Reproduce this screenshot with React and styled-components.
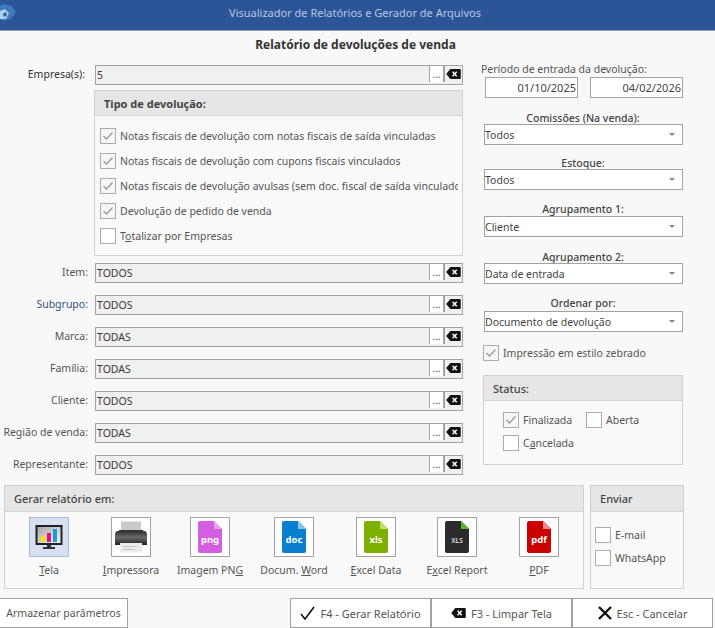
import React from 'react';
import styled, { createGlobalStyle } from 'styled-components';

const Global = createGlobalStyle`
  html, body { margin: 0; padding: 0; background: #f8f8f8; }
  body { font-family: "Noto Sans", "Open Sans", "Liberation Sans", sans-serif; font-size: 10.5px; color: #444; }
  * { box-sizing: border-box; }
`;
const Page = styled.div`width: 715px; height: 628px; overflow: hidden; display: flex; flex-direction: column; background: #f8f8f8;`;
const TitleBar = styled.header`
  height: 31px; flex: none; background: #2c5597; border-bottom: 1px solid #8f9db3; display: flex; align-items: center; justify-content: center;
  position: relative; color: #b5c6e0; font-size: 11px; padding: 0 5px 5px 0;
`;
const Logo = styled.svg`position: absolute; left: 0; top: 3px;`;
const Title = styled.h1`margin: 0; height: 34px; flex: none; display: flex; align-items: center; justify-content: center; font-size: 12px; font-weight: 700; color: #333; padding: 0 4px 8px 0;`;
const Main = styled.main`display: flex; flex: none; height: 420px; align-items: flex-start;`;
const Left = styled.section`width: 463px; flex: none; display: flex; flex-direction: column;`;
const Right = styled.section`width: 200px; margin-left: 21px; flex: none; display: flex; flex-direction: column; margin-top: -1px;`;
const Row = styled.div`display: flex; align-items: flex-start; height: 20px; margin-top: ${p => p.$top ?? 12}px;`;
const RowLabel = styled.label`
  width: 95px; flex: none; padding-right: ${p => p.$strong ? 10 : 7}px; text-align: right; line-height: 18px;
  color: ${p => p.$link ? '#34527f' : p.$strong ? '#333' : '#555'}; white-space: nowrap;
`;
const Field = styled.div`
  flex: 1; height: 20px; background: #f0f0f0; border: 1px solid #a2a2a2; display: flex; align-items: flex-start; padding-left: 1px; color: #3a3a3a; line-height: 18px;
`;
const FieldValue = styled.span`flex: 1;`;
const Dots = styled.span`
  width: 16px; height: 16px; background: #fff; border-left: 1px solid #a2a2a2; border-right: 2px solid #a2a2a2; text-align: center; line-height: 17px; font-size: 10px; color: #555;
`;
const ClearBox = styled.span`width: 17px; height: 16px; display: flex; align-items: center; justify-content: center; padding-right: 1px;`;
const Group = styled.div`
  border: 1px solid #d0d0d0; display: flex; flex-direction: column; background: #f9f9f9;
`;
const TipoGroup = styled(Group)`margin: 5px 0 0 94px; height: 166px; width: 369px;`;
const GroupHead = styled.div`
  background: #e6e6e6; border-bottom: 1px solid #d4d4d4; height: ${p => p.$h || 25}px; flex: none; display: flex; align-items: center; padding-left: ${p => p.$pad || 9}px; font-weight: ${p => p.$bold ? 700 : 500}; color: #444; font-size: 11px;
`;
const CheckList = styled.div`display: flex; flex-direction: column; gap: 9px; padding: 12px 0 0 5px; overflow: hidden;`;
const CheckRow = styled.div`display: flex; align-items: center; gap: 4px; height: 16px; white-space: nowrap; color: #555;`;
const Clip = styled.span`display: block; overflow: hidden; width: 338px; line-height: 16px;`;
const BoxEl = styled.span`width: 16px; height: 16px; flex: none; border: 1px solid #ababab; background: ${p => p.$on ? '#f6f6f6' : '#fff'}; display: flex; align-items: center; justify-content: center;`;
const U = styled.span`text-decoration: underline;`;
const Check = ({ on }) => (
  <BoxEl $on={on}>{on && <svg width="12" height="10" viewBox="0 0 12 10"><path d="M1.5 5 L4.5 8 L10.5 1.5" fill="none" stroke="#9a9a9a" strokeWidth="1.3" /></svg>}</BoxEl>
);
const ClearIcon = ({ w = 15, h = 10 }) => (
  <svg width={w} height={h} viewBox="0 0 16 11" style={{ display: 'block' }}>
    <path d="M4.5 0 H15 Q16 0 16 1 V10 Q16 11 15 11 H4.5 L0 5.5 Z" fill="#111" />
    <path d="M7 3 L11.5 8 M11.5 3 L7 8" stroke="#fff" strokeWidth="1.6" />
  </svg>
);
const PeriodLabel = styled.div`margin-left: -3px; line-height: 14px; color: #555; margin-top: -2px;`;
const Dates = styled.div`display: flex; gap: 12px; width: 198px; margin: 1px 0 0 1px;`;
const DateBox = styled.div`flex: 1; height: 21px; background: #fff; border: 1px solid #a2a2a2; text-align: right; padding-right: 1px; line-height: 19px; color: #444; font-size: 11px;`;
const SelLabel = styled.div`text-align: center; width: 198px; line-height: 14px; color: #444; font-weight: 500; margin-top: ${p => p.$top}px;`;
const Select = styled.div`width: 199px; height: 21px; background: #fff; border: 1px solid #a2a2a2; display: flex; align-items: center; justify-content: space-between; padding: 0 7px 0 0; color: #444; margin-top: ${p => p.$top}px;`;
const Arrow = styled.span`width: 0; height: 0; border-left: 3.5px solid transparent; border-right: 3.5px solid transparent; border-top: 3px solid #888;`;
const ZebraRow = styled(CheckRow)`margin: 13px 0 0 -1px;`;
const StatusGroup = styled(Group)`margin: 14px 0 0 -1px; width: 200px; height: 90px;`;
const StatusGrid = styled.div`display: grid; grid-template-columns: 83px auto; row-gap: 7px; padding: 11px 0 0 19px;`;
const Bottom = styled.div`display: flex; gap: 6px; margin: 0 0 0 4px; flex: none;`;
const GenGroup = styled(Group)`width: 580px; height: 104px;`;
const SendGroup = styled(Group)`width: 94px; height: 104px;`;
const Tiles = styled.div`display: grid; grid-template-columns: 82px 82px 76px 92px 72px 90px 74px; padding: 5px 0 0 3px;`;
const TileCol = styled.div`display: flex; flex-direction: column; align-items: center; color: #555; white-space: nowrap;`;
const Tile = styled.div`width: 40px; height: 40px; border: 1px solid ${p => p.$active ? '#a9bbd8' : '#a2a2a2'}; background: ${p => p.$active ? '#d5e0f1' : '#fff'}; display: flex; align-items: center; justify-content: center;`;
const TileText = styled.div`margin-top: 5px; line-height: 16px;`;
const SendList = styled.div`display: flex; flex-direction: column; gap: 7px; padding: 15px 0 0 4px;`;
const Footer = styled.footer`display: flex; margin-top: 9px; padding-right: 2px; justify-content: space-between; flex: none;`;
const FootBtn = styled.button`
  height: 30px; background: #fff; border: 1px solid #a2a2a2; display: flex; align-items: center; justify-content: center; gap: 5px; font: inherit; font-size: ${p => p.$size || 10.5}px; color: #555; padding: 0; width: ${p => p.$w}px; margin-left: ${p => p.$ml || 0}px;
`;
const Group3 = styled.div`display: flex;`;

const FileIcon = ({ color, fold, label, small }) => (
  <svg width="24" height="32" viewBox="0 0 24 32">
    <path d="M2 0 H16 L24 8 V30 Q24 32 22 32 H2 Q0 32 0 30 V2 Q0 0 2 0 Z" fill={color} />
    <path d="M16 0 L24 8 H16 Z" fill={fold} />
    <text x="12" y="22" textAnchor="middle" fill={small ? '#ccc' : '#fff'} fontSize={small ? 6.5 : 9.5} fontWeight="700" fontFamily="Noto Sans, sans-serif">{label}</text>
  </svg>
);
const Monitor = () => (
  <svg width="28" height="25" viewBox="0 0 28 25">
    <defs>
      <linearGradient id="sc" x1="0" y1="0" x2="1" y2="1">
        <stop offset="0" stopColor="#a8a8a8" />
        <stop offset="1" stopColor="#f4f4f4" />
      </linearGradient>
    </defs>
    <rect x="0.5" y="0" width="27" height="20" fill="#222" />
    <rect x="2.5" y="2" width="23" height="16" fill="url(#sc)" />
    <rect x="6" y="11" width="4" height="6" fill="#f5e400" />
    <rect x="12" y="8" width="4" height="9" fill="#e6117f" />
    <rect x="18" y="4" width="4" height="13" fill="#159fd8" />
    <rect x="12" y="20" width="4" height="2" fill="#333" />
    <rect x="8" y="22" width="12" height="2" fill="#333" />
  </svg>
);
const Printer = () => (
  <svg width="32" height="32" viewBox="0 0 32 32">
    <defs>
      <linearGradient id="pb" x1="0" y1="0" x2="0" y2="1">
        <stop offset="0" stopColor="#2e2e2e" />
        <stop offset="0.45" stopColor="#6a6a6a" />
        <stop offset="1" stopColor="#222" />
      </linearGradient>
    </defs>
    <rect x="6" y="0.5" width="20" height="9" fill="#c9c9c9" />
    <rect x="4" y="9" width="24" height="2" fill="#333" />
    <path d="M3 10 H29 Q32 10 32 14 V24 H0 V14 Q0 10 3 10 Z" fill="url(#pb)" />
    <rect x="5" y="22" width="22" height="9.5" fill="#ececec" />
    <rect x="8" y="25" width="14" height="1" fill="#c4c4c4" />
    <rect x="8" y="28" width="12" height="1" fill="#c4c4c4" />
  </svg>
);
const BigCheck = () => <svg width="15" height="14" viewBox="0 0 15 14"><path d="M1 8 L5 13 L14 1" fill="none" stroke="#111" strokeWidth="1.6" /></svg>;
const BigX = () => <svg width="14" height="14" viewBox="0 0 14 14"><path d="M1 1 L13 13 M13 1 L1 13" stroke="#111" strokeWidth="2.4" /></svg>;

const rows = [['Item:', 'TODOS'], ['Subgrupo:', 'TODOS', 1], ['Marca:', 'TODAS'], ['Família:', 'TODAS'], ['Cliente:', 'TODOS'], ['Região de venda:', 'TODAS'], ['Representante:', 'TODOS']];
const selects = [['Comissões (Na venda):', 'Todos', 13, -1], ['Estoque:', 'Todos', 11, -1], ['Agrupamento 1:', 'Cliente', 12, 0], ['Agrupamento 2:', 'Data de entrada', 13, -1], ['Ordenar por:', 'Documento de devolução', 12, 1]];

const Lookup = ({ value }) => (
  <Field>
    <FieldValue>{value}</FieldValue>
    <Dots>...</Dots>
    <ClearBox><ClearIcon /></ClearBox>
  </Field>
);

export default function App() {
  return (
    <Page>
      <Global />
      <TitleBar>
        <Logo width="18" height="22" viewBox="0 0 18 22">
          <path d="M4 1 L12 3 L16 9 L11 16 L3 18 L0 16 V3 Z" fill="#3f78bd" />
          <path d="M0 8 L5 6 L9 10 L6 16 L0 16 Z" fill="#a9d0ef" />
          <path d="M3 11 L6 9 L7 12 L4 14 Z" fill="#2c5597" />
        </Logo>
        Visualizador de Relatórios e Gerador de Arquivos
      </TitleBar>
      <Title>Relatório de devoluções de venda</Title>
      <Main>
        <Left>
          <Row $top={0}>
            <RowLabel $strong>Empresa(s):</RowLabel>
            <Lookup value="5" />
          </Row>
          <TipoGroup>
            <GroupHead $bold>Tipo de devolução:</GroupHead>
            <CheckList>
              <CheckRow><Check on /><Clip>Notas fiscais de devolução com notas fiscais de saída vinculadas</Clip></CheckRow>
              <CheckRow><Check on /><Clip>Notas fiscais de devolução com cupons fiscais vinculados</Clip></CheckRow>
              <CheckRow><Check on /><Clip>Notas fiscais de devolução avulsas (sem doc. fiscal de saída vinculados)</Clip></CheckRow>
              <CheckRow><Check on /><Clip>Devolução de pedido de venda</Clip></CheckRow>
              <CheckRow><Check /><Clip>T<U>o</U>talizar por Empresas</Clip></CheckRow>
            </CheckList>
          </TipoGroup>
          {rows.map(([l, v, link], i) => (
            <Row key={l} $top={i === 0 ? 7 : 12}>
              <RowLabel $link={link}>{l}</RowLabel>
              <Lookup value={v} />
            </Row>
          ))}
        </Left>
        <Right>
          <PeriodLabel>Período de entrada da devolução:</PeriodLabel>
          <Dates>
            <DateBox>01/10/2025</DateBox>
            <DateBox>04/02/2026</DateBox>
          </Dates>
          {selects.map(([l, v, t, m]) => (
            <React.Fragment key={l}>
              <SelLabel $top={t}>{l}</SelLabel>
              <Select $top={m}>{v}<Arrow /></Select>
            </React.Fragment>
          ))}
          <ZebraRow><Check on /><span>Impressão em estilo zebrado</span></ZebraRow>
          <StatusGroup>
            <GroupHead $h={25}>Status:</GroupHead>
            <StatusGrid>
              <CheckRow><Check on /><span>Finalizada</span></CheckRow>
              <CheckRow><Check /><span>Aberta</span></CheckRow>
              <CheckRow><Check /><span>C<U>a</U>ncelada</span></CheckRow>
            </StatusGrid>
          </StatusGroup>
        </Right>
      </Main>
      <Bottom>
        <GenGroup>
          <GroupHead $h={26}>Gerar relatório em:</GroupHead>
          <Tiles>
            <TileCol><Tile $active><Monitor /></Tile><TileText><U>T</U>ela</TileText></TileCol>
            <TileCol><Tile><Printer /></Tile><TileText><U>I</U>mpressora</TileText></TileCol>
            <TileCol><Tile><FileIcon color="#d45ee2" fold="#ee9ff5" label="png" /></Tile><TileText>Imagem PN<U>G</U></TileText></TileCol>
            <TileCol><Tile><FileIcon color="#0a7fd0" fold="#7cc4f2" label="doc" /></Tile><TileText>Docum. <U>W</U>ord</TileText></TileCol>
            <TileCol><Tile><FileIcon color="#7db000" fold="#c3e060" label="xls" /></Tile><TileText><U>E</U>xcel Data</TileText></TileCol>
            <TileCol><Tile><FileIcon color="#2b2b2b" fold="#5fb82a" label="XLS" small /></Tile><TileText>E<U>x</U>cel Report</TileText></TileCol>
            <TileCol><Tile><FileIcon color="#cc0000" fold="#f58a8a" label="pdf" /></Tile><TileText><U>P</U>DF</TileText></TileCol>
          </Tiles>
        </GenGroup>
        <SendGroup>
          <GroupHead $h={26}>Enviar</GroupHead>
          <SendList>
            <CheckRow><Check /><span>E-mail</span></CheckRow>
            <CheckRow><Check /><span>WhatsApp</span></CheckRow>
          </SendList>
        </SendGroup>
      </Bottom>
      <Footer>
        <FootBtn $w={129} $ml={-1}>Armazenar parâmetros</FootBtn>
        <Group3>
          <FootBtn $w={141} $size={11}><BigCheck /><span>F4 - Gerar Relatório</span></FootBtn>
          <FootBtn $w={141} $size={11}><ClearIcon /><span>F3 - Limpar Tela</span></FootBtn>
          <FootBtn $w={141} $size={11}><BigX /><span>Esc - Cancelar</span></FootBtn>
        </Group3>
      </Footer>
    </Page>
  );
}
